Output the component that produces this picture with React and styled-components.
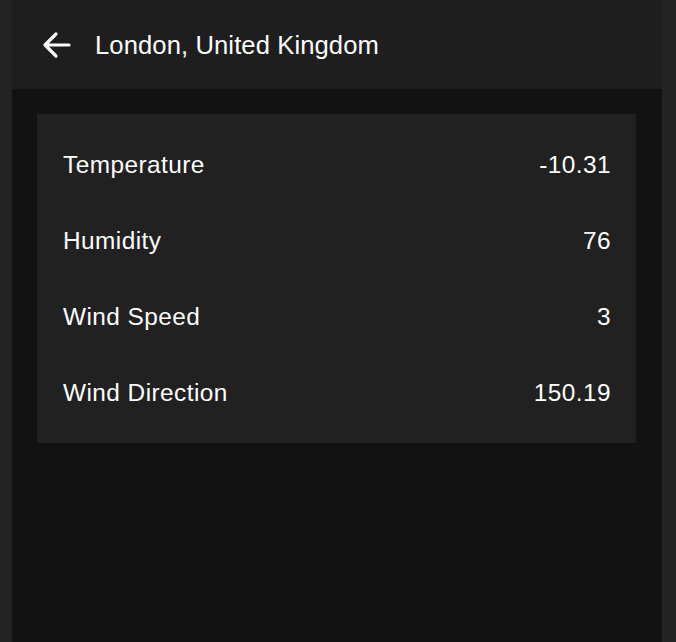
import React from "react";
import styled, { createGlobalStyle } from "styled-components";

const GlobalStyle = createGlobalStyle`
    html, body {
        margin: 0;
        padding: 0;
        background: #232323;
        font-family: "Liberation Sans", Arial, sans-serif;
        -webkit-font-smoothing: antialiased;
    }
`;

const weather = [
    { label: "Temperature", value: "-10.31" },
    { label: "Humidity", value: "76" },
    { label: "Wind Speed", value: "3" },
    { label: "Wind Direction", value: "150.19" },
];

const BackArrow = () => (
    <svg width="30" height="28" viewBox="0 0 30 28" fill="none">
        <path
            d="M28 14H4M15 3L4 14l11 11"
            stroke="#ffffff"
            strokeWidth="3.2"
            strokeLinecap="round"
            strokeLinejoin="round"
        />
    </svg>
);

const App = () => {
    return (
        <>
            <GlobalStyle />
            <Screen>
                <Header>
                    <BackButton aria-label="Back">
                        <BackArrow />
                    </BackButton>
                    <Title>London, United Kingdom</Title>
                </Header>
                <Content>
                    <Card>
                        {weather.map((item) => (
                            <Row key={item.label}>
                                <span>{item.label}</span>
                                <span>{item.value}</span>
                            </Row>
                        ))}
                    </Card>
                </Content>
            </Screen>
        </>
    );
};

const Screen = styled.div`
    margin: 0 14px 0 12px;
    min-height: 642px;
    display: flex;
    flex-direction: column;
    background: #121212;
`;

const Header = styled.header`
    height: 89px;
    display: flex;
    align-items: center;
    padding: 2px 0 0 29px;
    box-sizing: border-box;
    background: #1e1e1e;
    color: #ffffff;
`;

const BackButton = styled.button`
    display: flex;
    align-items: center;
    padding: 0;
    margin: 0 24px 1px 0;
    background: none;
    border: none;
    cursor: pointer;
`;

const Title = styled.h1`
    margin: 0;
    font-size: 25.6px;
    font-weight: 400;
    letter-spacing: 0.1px;
`;

const Content = styled.main`
    flex: 1;
    padding: 25px 26px 25px 25px;
`;

const Card = styled.section`
    background: #212121;
    padding: 13px 25px 12px 26px;
`;

const Row = styled.div`
    height: 76px;
    display: flex;
    align-items: center;
    justify-content: space-between;
    color: #ffffff;
    font-size: 24.4px;
    letter-spacing: 0.45px;
`;

export default App;
